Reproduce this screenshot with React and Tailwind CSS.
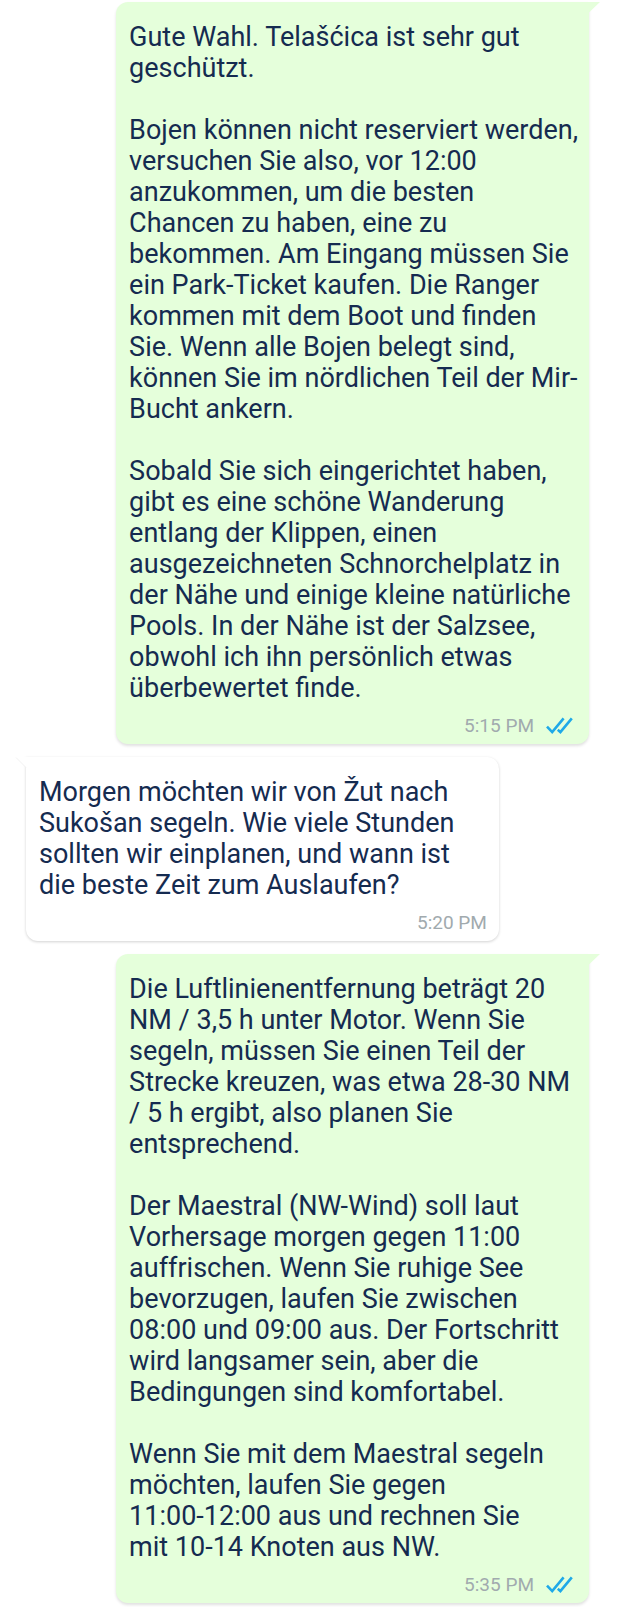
import React from 'react';

const messages = [
  {
    id: 1,
    sent: true,
    time: '5:15 PM',
    paragraphs: [
      'Gute Wahl. Telašćica ist sehr gut geschützt.',
      'Bojen können nicht reserviert werden, versuchen Sie also, vor 12:00 anzukommen, um die besten Chancen zu haben, eine zu bekommen. Am Eingang müssen Sie ein Park-Ticket kaufen. Die Ranger kommen mit dem Boot und finden Sie. Wenn alle Bojen belegt sind, können Sie im nördlichen Teil der Mir-Bucht ankern.',
      'Sobald Sie sich eingerichtet haben, gibt es eine schöne Wanderung entlang der Klippen, einen ausgezeichneten Schnorchelplatz in der Nähe und einige kleine natürliche Pools. In der Nähe ist der Salzsee, obwohl ich ihn persönlich etwas überbewertet finde.',
    ],
  },
  {
    id: 2,
    sent: false,
    time: '5:20 PM',
    paragraphs: [
      'Morgen möchten wir von Žut nach Sukošan segeln. Wie viele Stunden sollten wir einplanen, und wann ist die beste Zeit zum Auslaufen?',
    ],
  },
  {
    id: 3,
    sent: true,
    time: '5:35 PM',
    paragraphs: [
      'Die Luftlinienentfernung beträgt 20 NM / 3,5 h unter Motor. Wenn Sie segeln, müssen Sie einen Teil der Strecke kreuzen, was etwa 28-30 NM / 5 h ergibt, also planen Sie entsprechend.',
      'Der Maestral (NW-Wind) soll laut Vorhersage morgen gegen 11:00 auffrischen. Wenn Sie ruhige See bevorzugen, laufen Sie zwischen 08:00 und 09:00 aus. Der Fortschritt wird langsamer sein, aber die Bedingungen sind komfortabel.',
      'Wenn Sie mit dem Maestral segeln möchten, laufen Sie gegen\n11:00-12:00 aus und rechnen Sie\nmit 10-14 Knoten aus NW.',
    ],
  },
];

const ReadTicks = () => (
  <svg className="h-[18px] w-[27px]" viewBox="0 0 27 18" fill="none" stroke="#1fa9e8" strokeWidth="2.6" role="img" aria-label="Gelesen">
    <path d="M1 9.6 L6.2 15.1 L17.6 1.4" />
    <path d="M11.8 12.8 L14.4 15.1 L25.8 1.4" />
  </svg>
);

const Tail = ({ sent }) =>
  sent ? (
    <svg className="absolute top-0 left-full -ml-px h-3 w-3" viewBox="0 0 12 12" aria-hidden="true">
      <path d="M0 0 H12 L1 10.5 V12 H0 Z" fill="#e5ffdb" />
    </svg>
  ) : (
    <svg className="absolute top-0 right-full -mr-px h-3 w-3" viewBox="0 0 12 12" aria-hidden="true">
      <path d="M12 0 H1 L11 10.5 V12 H12 Z" fill="#ffffff" />
      <path d="M1 0.5 L11 10.5" stroke="#f1f1f1" fill="none" />
    </svg>
  );

const Message = ({ message }) => {
  const { sent, time, paragraphs } = message;

  return (
    <li
      className={
        sent
          ? 'relative w-[84%] self-end rounded-xl rounded-tr-none bg-[#e5ffdb] pt-5 pr-2 pb-1 pl-[13px] shadow-[0_2px_3px_rgba(0,0,0,0.12)]'
          : 'relative w-[84%] self-start rounded-xl rounded-tl-none bg-white pt-5 pr-2 pb-1 pl-[13px] shadow-[0_1px_3px_rgba(0,0,0,0.18)]'
      }
    >
      <Tail sent={sent} />
      <div className="flex flex-col gap-[31px] text-[27px] leading-[31px] text-[#152b50]">
        {paragraphs.map((text, i) => (
          <p key={i} className="whitespace-pre-line">{text}</p>
        ))}
      </div>
      <div className={`mt-2 flex items-center justify-end gap-3 text-[19px] leading-7 text-[#a1aaae] ${sent ? 'pr-2' : 'pr-1'}`}>
        <time>{time}</time>
        {sent && <ReadTicks />}
      </div>
    </li>
  );
};

export default function App() {
  return (
    <main className="bg-white pt-0.5 pr-[41px] pl-[26px] font-['Roboto',sans-serif]">
      <ul className="flex flex-col gap-[13px] pb-1">
        {messages.map((m) => (
          <Message key={m.id} message={m} />
        ))}
      </ul>
    </main>
  );
}
